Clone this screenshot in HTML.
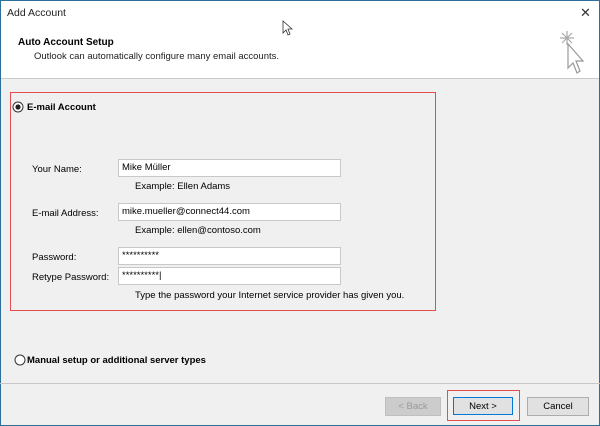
<!DOCTYPE html><html><head><style>
body{margin:0;width:600px;height:426px;overflow:hidden;font-family:"Liberation Sans",sans-serif;font-size:9.5px;color:#000;position:relative;background:#f0f0f0}
.a{position:absolute}
.in{position:absolute;left:118px;width:218px;height:16px;background:#fff;border:1px solid #c8c8c8;line-height:16px;padding-left:3px;box-sizing:content-box;font-size:9.5px}
.btn{position:absolute;top:397px;height:17px;border:1px solid #adadad;background:#e1e1e1;text-align:center;line-height:17px;font-size:9.5px}
</style></head><body>
<div class="a" style="left:0;top:0;width:600px;height:78px;background:#fff;border-bottom:1px solid #c8c8c8"></div>
<div class="a" style="left:0;top:0;width:1px;height:426px;background:#2b6f9a"></div>
<div class="a" style="left:599px;top:0;width:1px;height:426px;background:#2b6f9a"></div>
<div class="a" style="left:0;top:0;width:600px;height:1px;background:#2b6f9a"></div>
<div class="a" style="left:0;top:425px;width:600px;height:1px;background:#2b6f9a"></div>
<div class="a" style="left:7px;top:7px;font-size:10.5px;color:#222">Add Account</div>
<div class="a" style="left:580px;top:5px;font-size:13px;color:#333">✕</div>
<svg class="a" style="left:282px;top:20px" width="12" height="18"><path d="M1 1 L1 13 L4 10 L6 15 L8 14 L6 9 L10 9 Z" fill="#fff" stroke="#333" stroke-width="0.8"/></svg>
<div class="a" style="left:18px;top:37px;font-weight:bold;font-size:10px">Auto Account Setup</div>
<div class="a" style="left:34px;top:51px;font-size:9.5px;color:#222">Outlook can automatically configure many email accounts.</div>
<svg class="a" style="left:555px;top:30px" width="34" height="46"><g stroke="#aaa" stroke-width="1.2"><path d="M12 1V15M5 8H19M7 3L17 13M17 3L7 13"/></g><path d="M13 14 L13 38 L18 33 L22 43 L25 41 L21 31 L28 31 Z" fill="#fff" stroke="#999" stroke-width="1.2"/></svg>
<div class="a" style="left:0;top:383px;width:600px;height:1px;background:#c8c8c8"></div>
<div class="a" style="left:10px;top:92px;width:424px;height:217px;border:1.5px solid #e05050"></div>
<svg class="a" style="left:12px;top:101px" width="12" height="12"><circle cx="6" cy="6" r="5" fill="#fff" stroke="#333"/><circle cx="6" cy="6" r="2.6" fill="#222"/></svg>
<div class="a" style="left:27px;top:102px;font-weight:bold;font-size:9.5px">E-mail Account</div>
<div class="a" style="left:32px;top:164px">Your Name:</div>
<div class="in" style="top:159px">Mike Müller</div>
<div class="a" style="left:135px;top:181px">Example: Ellen Adams</div>
<div class="a" style="left:32px;top:208px">E-mail Address:</div>
<div class="in" style="top:203px">mike.mueller@connect44.com</div>
<div class="a" style="left:135px;top:225px">Example: ellen@contoso.com</div>
<div class="a" style="left:32px;top:252px">Password:</div>
<div class="in" style="top:247px">**********</div>
<div class="a" style="left:32px;top:272px">Retype Password:</div>
<div class="in" style="top:267px">**********|</div>
<div class="a" style="left:135px;top:290px">Type the password your Internet service provider has given you.</div>
<svg class="a" style="left:14px;top:354px" width="12" height="12"><circle cx="6" cy="6" r="5" fill="#fff" stroke="#333"/></svg>
<div class="a" style="left:27px;top:355px;font-weight:bold">Manual setup or additional server types</div>
<div class="btn" style="left:385px;width:54px;color:#999;background:#ccc;border-color:#bfbfbf">&lt; Back</div>
<div class="a" style="left:447px;top:390px;width:71px;height:29px;border:1px solid #e05050"></div>
<div class="btn" style="left:453px;width:58px;border:1.5px solid #0078d7;height:16px">Next &gt;</div>
<div class="btn" style="left:527px;width:60px">Cancel</div>
</body></html>
